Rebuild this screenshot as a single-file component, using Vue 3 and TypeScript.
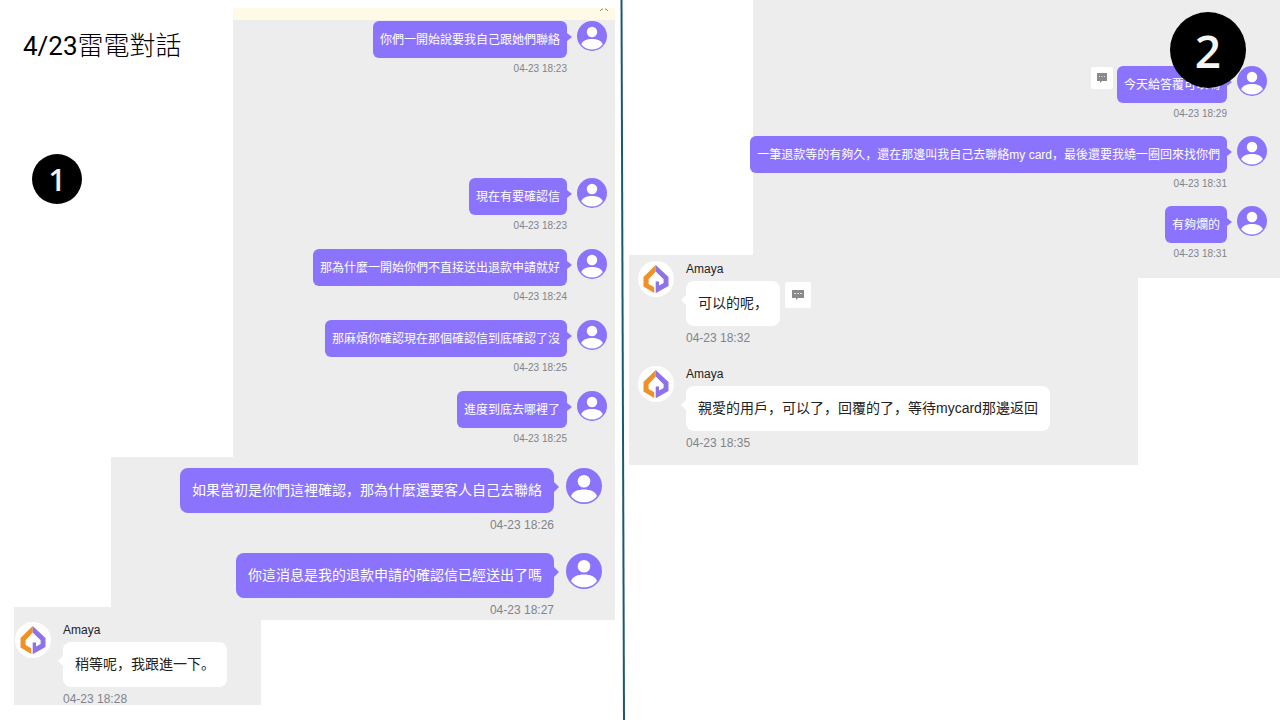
<script setup lang="ts">
interface Message {
  text: string
  time: string
  spaced?: boolean
  reply?: boolean
}

const earlyMessages: Message[] = [
  { text: '你們一開始說要我自己跟她們聯絡', time: '04-23 18:23', spaced: true },
  { text: '現在有要確認信', time: '04-23 18:23' },
  { text: '那為什麼一開始你們不直接送出退款申請就好', time: '04-23 18:24' },
  { text: '那麻煩你確認現在那個確認信到底確認了沒', time: '04-23 18:25' },
  { text: '進度到底去哪裡了', time: '04-23 18:25' },
]

const followUps: Message[] = [
  { text: '如果當初是你們這裡確認，那為什麼還要客人自己去聯絡', time: '04-23 18:26' },
  { text: '你這消息是我的退款申請的確認信已經送出了嗎', time: '04-23 18:27' },
]

const firstAnswer: Message[] = [{ text: '稍等呢，我跟進一下。', time: '04-23 18:28' }]

const complaints: Message[] = [
  { text: '今天給答覆可以嗎', time: '04-23 18:29', reply: true },
  { text: '一筆退款等的有夠久，還在那邊叫我自己去聯絡my card，最後還要我繞一圈回來找你們', time: '04-23 18:31' },
  { text: '有夠爛的', time: '04-23 18:31' },
]

const lastAnswers: Message[] = [
  { text: '可以的呢，', time: '04-23 18:32', reply: true },
  { text: '親愛的用戶，可以了，回覆的了，等待mycard那邊返回', time: '04-23 18:35' },
]

const outgoing = {
  early: { name: 'early small', items: earlyMessages },
  follow: { name: 'follow', items: followUps },
  complaints: { name: 'complaints small', items: complaints },
}
const leftGroups = [outgoing.early, outgoing.follow]
</script>

<template>
  <main class="slide">
    <section class="pane left">
      <div v-for="(group, g) in leftGroups" :key="g" class="row">
        <header v-if="g === 0" class="heading">
          <h1><span class="date">4/23</span>雷電對話</h1>
          <span class="badge one">1</span>
        </header>
        <div class="panel" :class="group.name">
          <div v-if="g === 0" class="notice">
            <svg class="mark" viewBox="0 0 10 4" aria-hidden="true">
              <path d="M1 3 L3 1 L4 1 M6 1 L7 1 L9 3" />
            </svg>
          </div>
          <ul class="messages">
            <li v-for="(m, i) in group.items" :key="i" class="message out" :class="{ spaced: m.spaced }">
              <div class="body">
                <p class="bubble">{{ m.text }}</p>
                <time>{{ m.time }}</time>
              </div>
              <svg class="avatar" viewBox="0 0 36 36" aria-hidden="true">
                <circle cx="18" cy="18" r="18" fill="#8b73fb" />
                <circle cx="18" cy="13.3" r="6.3" fill="#fff" />
                <path d="M5 28C6.5 23.5 12 21.5 18 21.5S29.5 23.5 31 28C28 32.3 23 34.3 18 34.3S8 32.3 5 28Z" fill="#fff" />
              </svg>
            </li>
          </ul>
        </div>
      </div>
      <div class="panel first-answer">
        <ul class="messages">
          <li v-for="(m, i) in firstAnswer" :key="i" class="message in">
            <svg class="avatar" viewBox="0 0 36 36" aria-hidden="true">
              <circle cx="18" cy="18" r="18" fill="#fff" />
              <path d="M17.7 4L5.5 16V25.5L16.2 32V26.2L10.6 23V18.3L17.7 10.6Z" fill="#ee9126" />
              <path d="M17.7 4L30.5 16V25L17.7 32.3V20.5H21V24.6L25.6 22V18.3L17.7 10.6Z" fill="#8e72ea" />
            </svg>
            <div class="body">
              <span class="name">Amaya</span>
              <p class="bubble">{{ m.text }}</p>
              <time>{{ m.time }}</time>
            </div>
          </li>
        </ul>
      </div>
    </section>

    <svg class="divider" viewBox="0 0 6 720" preserveAspectRatio="none" aria-hidden="true">
      <line x1="2.5" y1="0" x2="5" y2="720" />
    </svg>

    <section class="pane right">
      <div class="panel" :class="outgoing.complaints.name">
        <ul class="messages">
          <li v-for="(m, i) in outgoing.complaints.items" :key="i" class="message out">
            <button v-if="m.reply" class="reply" type="button" aria-label="回覆">
              <svg viewBox="0 0 12 12" aria-hidden="true">
                <path d="M1 1H11V9H6L4 11V9H1Z" fill="#8a8a8a" />
                <path d="M3 4H4V5H3ZM5.5 4H6.5V5H5.5ZM8 4H9V5H8Z" fill="#ddd" />
              </svg>
            </button>
            <div class="body">
              <p class="bubble">{{ m.text }}</p>
              <time>{{ m.time }}</time>
            </div>
            <svg class="avatar" viewBox="0 0 36 36" aria-hidden="true">
              <circle cx="18" cy="18" r="18" fill="#8b73fb" />
              <circle cx="18" cy="13.3" r="6.3" fill="#fff" />
              <path d="M5 28C6.5 23.5 12 21.5 18 21.5S29.5 23.5 31 28C28 32.3 23 34.3 18 34.3S8 32.3 5 28Z" fill="#fff" />
            </svg>
          </li>
        </ul>
        <span class="badge two">2</span>
      </div>
      <div class="panel last-answers">
        <ul class="messages">
          <li v-for="(m, i) in lastAnswers" :key="i" class="message in">
            <svg class="avatar" viewBox="0 0 36 36" aria-hidden="true">
              <circle cx="18" cy="18" r="18" fill="#fff" />
              <path d="M17.7 4L5.5 16V25.5L16.2 32V26.2L10.6 23V18.3L17.7 10.6Z" fill="#ee9126" />
              <path d="M17.7 4L30.5 16V25L17.7 32.3V20.5H21V24.6L25.6 22V18.3L17.7 10.6Z" fill="#8e72ea" />
            </svg>
            <div class="body">
              <span class="name">Amaya</span>
              <div class="line">
                <p class="bubble">{{ m.text }}</p>
                <button v-if="m.reply" class="reply" type="button" aria-label="回覆">
                  <svg viewBox="0 0 12 12" aria-hidden="true">
                    <path d="M0 1H12V9H6L4 11V9H0Z" fill="#8a8a8a" />
                    <path d="M2 4H4V5H2ZM5 4H7V5H5ZM8 4H10V5H8Z" fill="#ddd" />
                  </svg>
                </button>
              </div>
              <time>{{ m.time }}</time>
            </div>
          </li>
        </ul>
      </div>
    </section>
  </main>
</template>

<style>
body {
  margin: 0;
  background: #fff;
}
</style>

<style scoped>
.slide {
  display: grid;
  grid-template-columns: minmax(0, 619fr) 6px minmax(0, 655fr);
  min-height: 100vh;
  color: #222;
  font-family: "Liberation Sans", "Noto Sans CJK SC", sans-serif;
}

.left {
  padding: 8px 4px 0 14px;
}

.right {
  padding-left: 4px;
}

.row {
  display: flex;
}

.heading {
  box-sizing: border-box;
  flex: 0 0 219px;
  padding: 20px 0 0 9px;
}

h1 {
  margin: 0 0 90px;
  color: #000;
  font: 300 26px/36px Roboto, "Noto Sans CJK TC", sans-serif;
  white-space: nowrap;
}

.date {
  font-weight: 400;
}

.badge {
  display: flex;
  align-items: center;
  justify-content: center;
  border-radius: 50%;
  background: #000;
  color: #f4f4f4;
  font-family: "Open Sans", sans-serif;
  font-weight: 600;
}

.one {
  width: 50px;
  height: 50px;
  margin-left: 9px;
  font-size: 30px;
}

.two {
  position: absolute;
  top: 12px;
  right: 34px;
  width: 76px;
  height: 76px;
  font-size: 46px;
}

.divider {
  width: 6px;
  height: 100%;
}

.divider line {
  stroke: #1d5872;
  stroke-width: 2;
}

.panel {
  position: relative;
  background: #ededee;
  --avatar: 36px;
  --gap: 12px;
}

.small {
  --avatar: 30px;
  --gap: 10px;
}

.early {
  flex: 1;
  padding-bottom: 12px;
}

.early .messages {
  gap: 17px;
  padding: 1px 8px 0 0;
}

.follow {
  flex: 1;
  margin-left: 97px;
  padding: 11px 13px 4px 0;
}

.first-answer {
  width: 246px;
  margin-top: -13px;
  padding: 15px 0 0 1px;
}

.complaints {
  margin-left: 124px;
  padding: 66px 13px 18px 0;
}

.complaints .messages {
  gap: 16px;
}

.last-answers {
  margin: -23px 142px 0 0;
  padding: 6px 0 16px 9px;
}

.notice {
  display: flex;
  justify-content: flex-end;
  height: 12px;
  padding-right: 6px;
  background: #fffae6;
}

.mark {
  width: 10px;
  height: 4px;
  fill: none;
  stroke: #8d8878;
}

.messages {
  display: flex;
  flex-direction: column;
  gap: 22px;
  margin: 0;
  padding: 0;
  list-style: none;
}

.message {
  display: flex;
  align-items: flex-start;
}

.out {
  justify-content: flex-end;
}

.spaced {
  margin-bottom: 86px;
}

.avatar {
  flex: none;
  width: var(--avatar);
  height: var(--avatar);
}

.body {
  display: flex;
  flex-direction: column;
  align-items: flex-start;
}

.out .body {
  align-items: flex-end;
  margin-right: var(--gap);
}

.in .body {
  margin-left: var(--gap);
}

.line {
  display: flex;
}

.name {
  height: 16px;
  margin-bottom: 4px;
  font-size: 12px;
  line-height: 16px;
}

.bubble {
  position: relative;
  margin: 0;
  padding: 12px;
  border-radius: 8px;
  background: #fff;
  font-size: 14px;
  line-height: 21px;
  white-space: nowrap;
}

.out .bubble {
  background: #8b73fd;
  color: #fff;
}

.small .bubble {
  padding: 10px 7px 8px;
  border-radius: 6px;
  font-size: 12px;
  line-height: 19px;
}

.bubble::after {
  content: "";
  position: absolute;
  top: 14px;
  border: 5px solid transparent;
}

.out .bubble::after {
  left: 100%;
  border-left-color: #8b73fd;
  border-right: 0;
}

.in .bubble::after {
  right: 100%;
  border-right-color: #fff;
  border-left: 0;
}

.small .bubble::after {
  top: 12px;
  border-width: 4px 0 4px 5px;
}

time {
  margin-top: 6px;
  color: #808488;
  font-size: 12px;
  line-height: 12px;
}

.small time {
  margin-top: 5px;
  font-size: 10px;
}

.reply {
  display: flex;
  align-items: center;
  justify-content: center;
  width: 26px;
  height: 26px;
  margin: 1px 0 0 5px;
  padding: 0;
  border: 0;
  border-radius: 2px;
  background: #fff;
}

.reply svg {
  width: 12px;
  height: 12px;
}

.small .reply {
  width: 22px;
  height: 22px;
  margin: 1px 4px 0 0;
}
</style>
